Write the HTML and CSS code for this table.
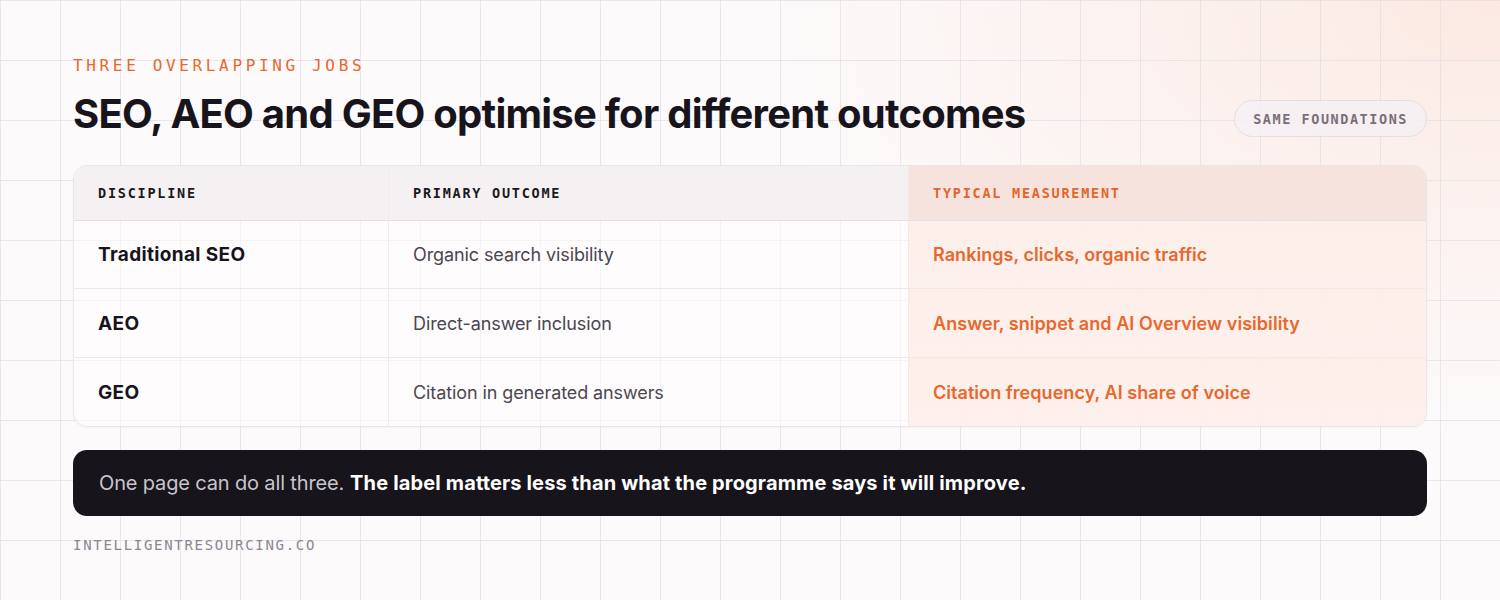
FILE: index.html
```html
<!DOCTYPE html>
<html lang="en">
<head>
<meta charset="utf-8">
<title>SEO, AEO and GEO</title>
<link rel="stylesheet" href="styles.css">
</head>
<body>
<main class="page">
  <header class="top">
    <div class="titles">
      <p class="eyebrow">THREE OVERLAPPING JOBS</p>
      <h1 class="title">SEO, AEO and GEO optimise for different outcomes</h1>
    </div>
    <span class="badge">SAME FOUNDATIONS</span>
  </header>

  <section class="table">
    <div class="cell head">DISCIPLINE</div>
    <div class="cell head">PRIMARY OUTCOME</div>
    <div class="cell head hl">TYPICAL MEASUREMENT</div>

    <div class="cell name">Traditional SEO</div>
    <div class="cell outcome">Organic search visibility</div>
    <div class="cell measure hl">Rankings, clicks, organic traffic</div>

    <div class="cell name">AEO</div>
    <div class="cell outcome">Direct-answer inclusion</div>
    <div class="cell measure hl">Answer, snippet and AI Overview visibility</div>

    <div class="cell name last">GEO</div>
    <div class="cell outcome last">Citation in generated answers</div>
    <div class="cell measure hl last">Citation frequency, AI share of voice</div>
  </section>

  <div class="note">One page can do all three. <strong>The label matters less than what the programme says it will improve.</strong></div>

  <footer class="site">INTELLIGENTRESOURCING.CO</footer>
</main>
</body>
</html>
```

FILE: styles.css
```css
html, body {
  margin: 0;
  padding: 0;
}

body {
  width: 1500px;
  height: 600px;
  overflow: hidden;
  background-color: #fcfafb;
  background-image:
    linear-gradient(to right, rgba(226, 222, 228, 0.7) 1px, transparent 1px),
    linear-gradient(to bottom, rgba(226, 222, 228, 0.7) 1px, transparent 1px),
    radial-gradient(ellipse 750px 430px at 1500px 0px, rgba(252, 222, 210, 0.6), rgba(252, 232, 222, 0) 100%);
  background-size: 60px 60px, 60px 60px, 100% 100%;
  font-family: "Inter", "DejaVu Sans", sans-serif;
  color: #17141c;
}

.page {
  padding: 56px 73px 0 73px;
  display: flex;
  flex-direction: column;
}

.top {
  display: flex;
  justify-content: space-between;
  align-items: flex-end;
}

.eyebrow {
  margin: 0;
  font-family: "DejaVu Sans Mono", monospace;
  font-size: 16px;
  line-height: 20px;
  letter-spacing: 3.65px;
  color: #e8672d;
}

.title {
  margin: 14px 0 0 0;
  font-size: 40px;
  line-height: 48px;
  font-weight: 700;
  letter-spacing: -0.75px;
  color: #17141c;
}

.badge {
  margin-bottom: 1px;
  height: 37px;
  box-sizing: border-box;
  padding: 0 18px;
  display: flex;
  align-items: center;
  border: 1px solid #e6dee3;
  border-radius: 19px;
  background: rgba(246, 240, 244, 0.85);
  font-family: "DejaVu Sans Mono", monospace;
  font-weight: 700;
  font-size: 13.5px;
  letter-spacing: 1.55px;
  color: #7a6e79;
}

.table {
  margin-top: 27px;
  display: grid;
  grid-template-columns: 315px 520px 1fr;
  grid-template-rows: 55px 68px 69px 68px;
  border: 1px solid #ebe5e8;
  border-radius: 14px;
  overflow: hidden;
  background: rgba(255, 253, 254, 0.55);
  box-shadow: 0 1px 2px rgba(40, 20, 30, 0.03);
}

.cell {
  display: flex;
  align-items: center;
  padding: 0 24px;
  border-bottom: 1px solid #eee8ea;
  border-right: 1px solid #f0eaec;
  font-size: 18px;
}

.cell.hl {
  border-right: none;
}

.cell.last {
  border-bottom: none;
}

.head {
  background: rgba(244, 239, 241, 0.9);
  border-bottom: 1px solid #e7e0e3;
  font-family: "DejaVu Sans Mono", monospace;
  font-weight: 700;
  font-size: 13.5px;
  letter-spacing: 1.75px;
  color: #1c1820;
}

.head.hl {
  background: rgba(246, 226, 220, 0.95);
  color: #e4642c;
}

.measure.hl {
  background: linear-gradient(to bottom, rgba(253, 236, 230, 0.85), rgba(253, 238, 233, 0.8));
}

.name {
  font-size: 19px;
  font-weight: 700;
  letter-spacing: 0.35px;
  color: #17141c;
}

.outcome {
  font-weight: 400;
  color: #4b4650;
  letter-spacing: -0.1px;
}

.measure {
  font-weight: 600;
  color: #e8672d;
  letter-spacing: 0.05px;
}

.note {
  margin-top: 23px;
  height: 66px;
  box-sizing: border-box;
  padding: 0 26px;
  display: flex;
  align-items: center;
  background: #17141c;
  border-radius: 14px;
  font-size: 20px;
  letter-spacing: -0.15px;
  color: #c9c5cd;
}

.note strong {
  margin-left: 6px;
  font-weight: 700;
  letter-spacing: 0.15px;
  color: #ffffff;
}

.site {
  margin-top: 20px;
  font-family: "DejaVu Sans Mono", monospace;
  font-size: 14px;
  line-height: 18px;
  letter-spacing: 1.7px;
  color: #8b8690;
}
```
